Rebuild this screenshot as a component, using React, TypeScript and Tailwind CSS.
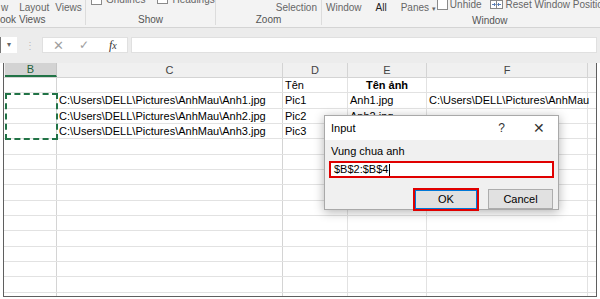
import React from 'react';

const font = { fontFamily: '"Liberation Sans", Arial, sans-serif' };

const rows: [string, string, string, string, string][] = [
  ['', '', 'Tên', 'Tên ảnh', ''],
  ['', 'C:\\Users\\DELL\\Pictures\\AnhMau\\Anh1.jpg', 'Pic1', 'Anh1.jpg', 'C:\\Users\\DELL\\Pictures\\AnhMau'],
  ['', 'C:\\Users\\DELL\\Pictures\\AnhMau\\Anh2.jpg', 'Pic2', 'Anh2.jpg', ''],
  ['', 'C:\\Users\\DELL\\Pictures\\AnhMau\\Anh3.jpg', 'Pic3', '', ''],
  ...Array.from({ length: 11 }, () => ['', '', '', '', ''] as [string, string, string, string, string]),
];

function Checkbox() {
  return <span className="inline-block w-[11px] h-[11px] border border-[#8a8a8a] bg-white" />;
}

function Ribbon() {
  return (
    <div className="flex h-[28px] shrink-0 bg-[#f3f3f3] border-b border-[#d4d4d4] text-[10px] text-[#666] leading-none">
      {/* Workbook Views */}
      <div className="w-[86px] shrink-0 flex flex-col border-r border-[#dcdcdc] mb-[2px]">
        <div className="h-[15px] flex items-center pl-[1px]">
          <span>w</span>
          <span className="ml-[11px]">Layout</span>
          <span className="ml-[6px]">Views</span>
        </div>
        <div className="flex-1 flex items-center text-[#555]">ook Views</div>
      </div>
      {/* Show */}
      <div className="w-[130px] shrink-0 flex flex-col border-r border-[#dcdcdc] mb-[2px] overflow-hidden">
        <div className="h-[15px] flex items-start">
          <div className="flex items-center gap-[4px] -mt-[7px] ml-[5px]">
            <Checkbox />
            <span>Gridlines</span>
            <span className="ml-[8px]"><Checkbox /></span>
            <span>Headings</span>
          </div>
        </div>
        <div className="flex-1 flex items-center justify-center text-[#555]">Show</div>
      </div>
      {/* Zoom */}
      <div className="w-[106px] shrink-0 flex flex-col border-r border-[#dcdcdc] mb-[2px]">
        <div className="h-[15px] flex items-center justify-end pr-[4px]">
          <span>Selection</span>
        </div>
        <div className="flex-1 flex items-center justify-center text-[#555]">Zoom</div>
      </div>
      {/* Window */}
      <div className="flex-1 min-w-0 flex flex-col overflow-hidden">
        <div className="h-[15px] flex items-center whitespace-nowrap">
          <span className="ml-[4px]">Window</span>
          <span className="ml-[14px] text-[#222]">All</span>
          <span className="ml-[14px]">Panes <span className="text-[7px]">▾</span></span>
          <div className="flex items-center -mt-[6px] ml-[1px]">
            <Checkbox />
            <span className="ml-[2px]">Unhide</span>
            <svg className="ml-[8px]" width="13" height="9" viewBox="0 0 13 9">
              <rect x="0.5" y="0.5" width="12" height="8" fill="white" stroke="#888" />
              <line x1="6.5" y1="0.5" x2="6.5" y2="8.5" stroke="#888" />
              <path d="M2 4.5h3M4 3l1.5 1.5L4 6M11 4.5H8M9 3L7.5 4.5 9 6" stroke="#5a7fb8" fill="none" />
            </svg>
            <span className="ml-[3px]">Reset Window Position</span>
          </div>
        </div>
        <div className="flex-1 flex items-center text-[#555] pl-[150px]">Window</div>
      </div>
    </div>
  );
}

function FormulaBar() {
  return (
    <div className="h-[35px] shrink-0 flex items-start pt-[9px] bg-[#ececec]">
      <div className="w-[17px] h-[16px] bg-white border-l border-[#777] flex items-center justify-center text-[8px] text-[#666]">▾</div>
      <div className="w-[25px] h-[16px] flex items-center justify-center text-[10px] text-[#bbb]">⋮</div>
      <div className="w-[86px] h-[16px] bg-white border border-[#e0e0e0] flex items-center text-[#a0a0a0]">
        <span className="ml-[10px] text-[13px] leading-none">✕</span>
        <span className="ml-[15px] text-[12px] leading-none">✓</span>
        <span className="ml-[20px] text-[12px] leading-none italic text-[#333]" style={{ fontFamily: '"Liberation Serif", serif' }}>
          f<span className="text-[10px]">x</span>
        </span>
      </div>
      <div className="w-[466px] h-[16px] ml-[3px] bg-white border border-[#e0e0e0]" />
    </div>
  );
}

function Grid() {
  const widths = ['w-[52px]', 'w-[226px]', 'w-[65px]', 'w-[79px]', 'w-[161px]'];
  return (
    <div className="relative flex-1 flex flex-col min-h-0 overflow-hidden bg-white ml-[3px] mr-[3px] border-l border-r border-b border-[#5f5f5f] text-[11px] text-black">
      {/* header */}
      <div className="flex h-[15px] shrink-0 bg-[#f0f0f0] border-b border-[#d4d4d4] text-[#444]">
        <div className="w-[1px]" />
        <div className="w-[52px] bg-[#d3d3d3] border-r border-[#c6c6c6] border-b-2 border-b-[#217346] flex items-center justify-center text-[#1f5f3a]">B</div>
        <div className="w-[226px] border-r border-[#d4d4d4] flex items-center justify-center">C</div>
        <div className="w-[65px] border-r border-[#d4d4d4] flex items-center justify-center">D</div>
        <div className="w-[79px] border-r border-[#d4d4d4] flex items-center justify-center">E</div>
        <div className="w-[161px] border-r border-[#d4d4d4] flex items-center justify-center">F</div>
        <div className="flex-1" />
      </div>
      {rows.map((r, i) => (
        <div key={i} className="flex h-[15.33px] shrink-0 border-b border-[#e2e2e2]">
          <div className="w-[1px]" />
          {r.map((c, j) => (
            <div
              key={j}
              className={`${widths[j]} shrink-0 border-r ${j === 0 || j === 1 ? 'border-[#d4d4d4]' : 'border-[#e2e2e2]'} flex items-center whitespace-nowrap overflow-visible ${j === 3 && i === 0 ? 'justify-center font-bold' : 'pl-[2px]'} ${j === 4 ? 'relative z-10' : ''}`}
            >
              {c}
            </div>
          ))}
          <div className="flex-1" />
        </div>
      ))}
      {/* copy marquee around B2:B4 */}
      <div className="absolute left-[1px] top-[30px] w-[53px] h-[47px] border-2 border-dashed border-[#217346]" />
    </div>
  );
}

function InputDialog() {
  return (
    <div className="absolute left-[324px] top-[115px] w-[235px] h-[95px] flex flex-col border border-[#a9a9a9] bg-[#f0f0f0] shadow-[0_2px_10px_rgba(0,0,0,0.3)] text-[11px] text-black">
      <div className="h-[24px] shrink-0 bg-white flex items-center pl-[6px]">
        <span>Input</span>
        <span className="ml-auto text-[12px] text-[#333]">?</span>
        <span className="ml-[28px] mr-[13px] text-[14px] text-[#333] font-light leading-none">✕</span>
      </div>
      <div className="flex flex-col px-[4px] pt-[5px]">
        <div className="pl-[2px] h-[12px] flex items-center">Vung chua anh</div>
        <div className="mt-[4px] h-[17px] border-2 border-[#e00000] bg-white flex items-center pl-[3px]">
          <span>$B$2:$B$4</span>
          <span className="ml-[1px] w-[1px] h-[12px] bg-black" />
        </div>
        <div className="flex justify-end gap-[9px] mt-[10px] pr-[1px]">
          <div className="w-[66px] h-[23px] border-2 border-[#e00000] flex">
            <div className="flex-1 border border-[#0078d7] bg-[#e1e1e1] flex items-center justify-center">OK</div>
          </div>
          <div className="w-[65px] h-[20px] mt-[1px] border border-[#adadad] bg-[#e1e1e1] flex items-center justify-center">Cancel</div>
        </div>
      </div>
    </div>
  );
}

export default function App() {
  return (
    <div className="relative w-[600px] h-[299px] overflow-hidden bg-white flex flex-col" style={font}>
      <Ribbon />
      <FormulaBar />
      <Grid />
      <div className="h-[2px] shrink-0" />
      <InputDialog />
    </div>
  );
}
